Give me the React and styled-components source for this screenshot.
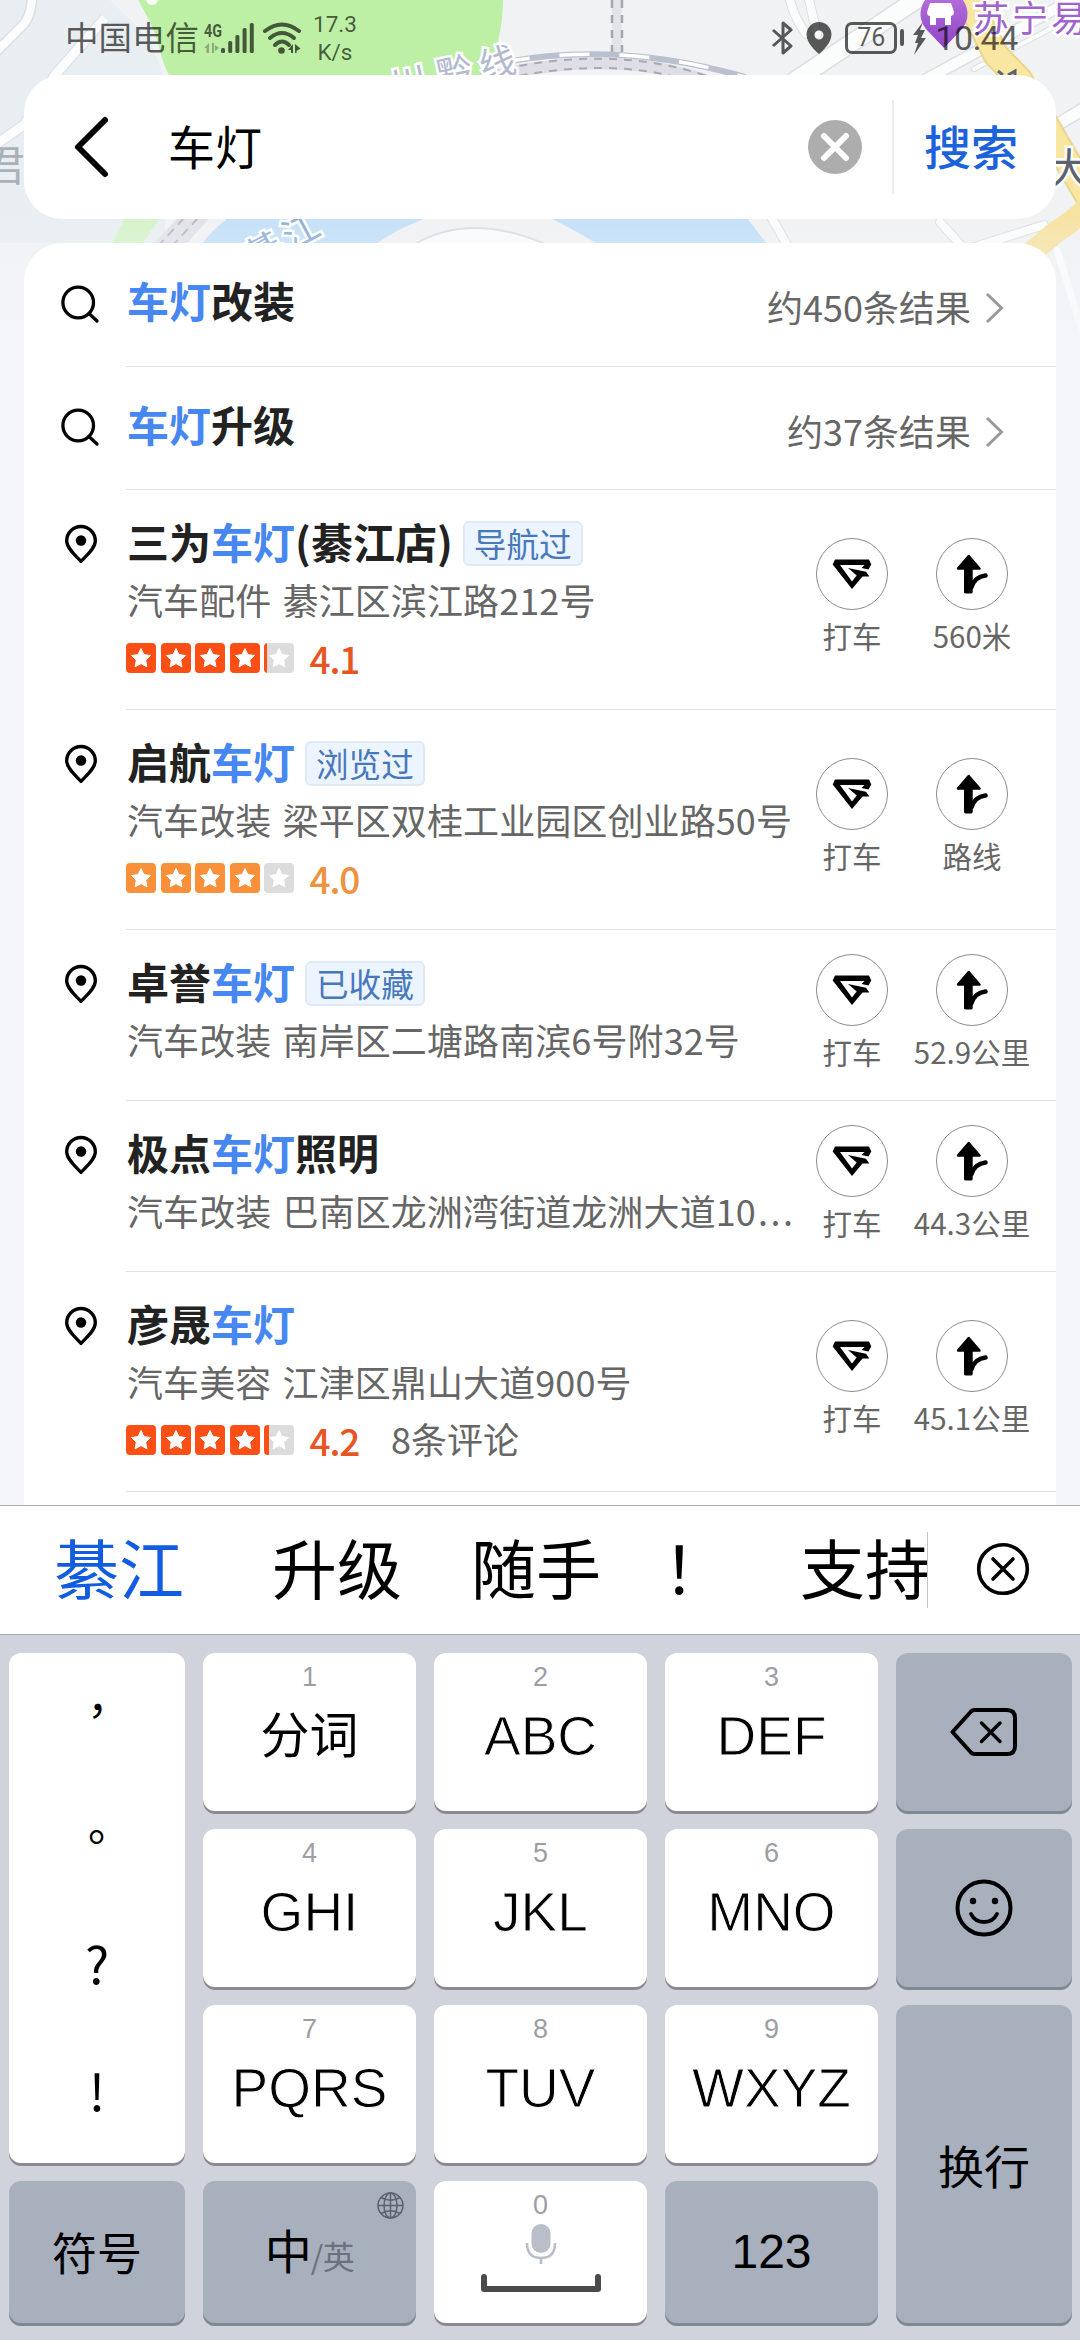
import React from 'react'
import styled, { createGlobalStyle } from 'styled-components'

const GlobalStyle = createGlobalStyle`
  * {
    box-sizing: border-box;
  }
  body {
    margin: 0;
    background: #f4f6f9;
    font-family: 'Noto Sans CJK SC', 'Noto Sans', sans-serif;
  }
  svg {
    display: block;
    flex: none;
  }
`

const suggestions = [
  { key: '改装', count: '约450条结果' },
  { key: '升级', count: '约37条结果' }
]

const places = [
  {
    before: '三为',
    after: '(綦江店)',
    tag: '导航过',
    address: '汽车配件 綦江区滨江路212号',
    score: '4.1',
    distance: '560米'
  },
  {
    before: '启航',
    tag: '浏览过',
    address: '汽车改装 梁平区双桂工业园区创业路50号',
    score: '4.0',
    distance: '路线'
  },
  {
    before: '卓誉',
    tag: '已收藏',
    address: '汽车改装 南岸区二塘路南滨6号附32号',
    distance: '52.9公里'
  },
  {
    before: '极点',
    after: '照明',
    address: '汽车改装 巴南区龙洲湾街道龙洲大道10',
    truncated: true,
    distance: '44.3公里'
  },
  {
    before: '彦晟',
    address: '汽车美容 江津区鼎山大道900号',
    score: '4.2',
    comments: '8条评论',
    distance: '45.1公里'
  }
]

const candidates = [
  { text: '綦江', width: 218, active: true },
  { text: '升级', width: 199 },
  { text: '随手', width: 192 },
  { text: '！', width: 137 },
  { text: '支持', width: 130 }
]

const Screen = styled.div`
  display: grid;
  width: 1080px;
  height: 2340px;
  overflow: hidden;
`

const MapBackdrop = styled.svg`
  grid-area: 1 / 1;
`

const Content = styled.div`
  grid-area: 1 / 1;
  z-index: 1;
  display: flex;
  flex-direction: column;
  height: 2340px;
`

/* status bar */

const StatusBar = styled.div`
  display: flex;
  justify-content: space-between;
  height: 75px;
  padding: 0 62px 0 65px;
  color: rgba(0, 0, 0, 0.64);
`

const StatusGroup = styled.div`
  display: flex;
  align-items: center;
  height: 75px;
`

const Carrier = styled.span`
  padding-bottom: 4px;
  font-size: 33.5px;
  line-height: 71px;
`

const NetSpeed = styled.div`
  display: flex;
  flex-direction: column;
  align-items: center;
  margin-left: 12px;
  font-family: Roboto, sans-serif;
  font-size: 22.5px;
  line-height: 28px;
  padding-top: 1px;
`

const Battery = styled.div`
  display: flex;
  align-items: center;
  justify-content: center;
  width: 52px;
  height: 32px;
  margin-left: 13px;
  border: 3px solid;
  border-radius: 7px;
  font-family: Roboto, sans-serif;
  font-size: 25px;
`

const BatteryNub = styled.div`
  width: 4px;
  height: 17px;
  margin: 0 8px 0 3px;
  border-radius: 2px;
  background: currentColor;
`

const Clock = styled.span`
  margin-left: 7px;
  font-family: Roboto, sans-serif;
  font-size: 34px;
  letter-spacing: -0.4px;
`

/* search box */

const SearchBox = styled.div`
  display: flex;
  align-items: center;
  height: 144px;
  margin: 0 24px 24px;
  padding-left: 48px;
  border-radius: 38px;
  background: #fff;
`

const Query = styled.div`
  flex: 1;
  margin-left: 56px;
  padding-bottom: 5px;
  color: #000;
  font-size: 47px;
  line-height: 60px;
`

const SearchButton = styled.div`
  display: flex;
  align-items: center;
  height: 94px;
  margin-left: 30px;
  padding: 0 38px 5px 30px;
  border-left: 2px solid #ececec;
  color: #1c62dc;
  font-size: 47px;
  font-weight: 500;
  line-height: 60px;
`

/* results */

const ResultCard = styled.div`
  flex: none;
  height: 1262px;
  margin: 0 24px;
  border-radius: 38px 38px 0 0;
  background: #fff;
  overflow: hidden;
`

const Row = styled.div`
  display: flex;
  height: ${({ height }) => height}px;
`

const RowIcon = styled.div`
  flex: none;
  width: 102px;
  padding-left: 37px;
  padding-top: ${({ top }) => top}px;
`

const RowBody = styled.div`
  display: flex;
  flex: 1;
  min-width: 0;
  border-bottom: 1px solid #e1e1e1;
`

const Title = styled.div`
  display: flex;
  align-items: center;
  height: 58px;
  padding-bottom: 4px;
  color: #222;
  font-size: 42px;
  font-weight: 700;
  line-height: 54px;
  white-space: nowrap;
`

const Highlight = styled.span`
  color: #4687f2;
`

const SuggestBody = styled(RowBody)`
  align-items: flex-start;
  justify-content: space-between;
  padding: 30px 51px 0 1px;
`

const ResultCount = styled.div`
  display: flex;
  align-items: center;
  height: 70px;
  color: #666;
  font-size: 36px;

  span {
    margin-right: 14px;
    padding-bottom: 5px;
  }
`

const PlaceInfo = styled.div`
  width: 666px;
  padding: 24px 0 0 1px;
`

const Tag = styled.span`
  height: 45px;
  margin: 4px 0 0 10px;
  padding: 0 9px;
  border: 2px solid #deeaf8;
  border-radius: 6px;
  background: #ebf4ff;
  color: #4878bc;
  font-size: 32.6px;
  font-weight: 400;
  line-height: 39px;
`

const Address = styled.div`
  height: 60px;
  color: #666;
  font-size: 36px;
  letter-spacing: 0.1px;
  line-height: 55px;
  word-spacing: 3px;
  white-space: nowrap;
`

const Dots = styled.span`
  margin-left: 2px;
  letter-spacing: 2.5px;
`

const RatingRow = styled.div`
  display: flex;
  align-items: center;
  height: 52px;
  margin-left: -1px;
`

const StarBox = styled.div`
  width: 30px;
  height: 30px;
  margin-right: 4.5px;
  border-radius: 4px;
  background: ${({ tint, fill }) =>
    `linear-gradient(90deg, ${tint} ${fill}%, #dcdcdc ${fill}%)`};
`

const Score = styled.span`
  margin-left: 11px;
  color: ${({ tint }) => tint};
  font-size: 37px;
  font-weight: 500;
  letter-spacing: -1.2px;
  line-height: 52px;
`

const Comments = styled.span`
  margin-left: 32px;
  padding-bottom: 3px;
  color: #666;
  font-size: 36px;
  line-height: 49px;
`

const Actions = styled.div`
  display: flex;
  align-items: center;
`

const Action = styled.div`
  display: flex;
  flex-direction: column;
  align-items: center;
  width: 120px;
  padding-bottom: 7px;
`

const ActionCircle = styled.div`
  width: 72px;
  height: 72px;
  border: 1px solid #8c8c8c;
  border-radius: 50%;

  svg {
    margin: -1px;
  }
`

const ActionLabel = styled.div`
  margin-top: 6px;
  color: #666;
  font-size: 29.5px;
  line-height: 38px;
  white-space: nowrap;
`

/* keyboard */

const Keyboard = styled.div`
  flex: 1;
  display: flex;
  flex-direction: column;
  border-top: 1px solid #a9aaad;
  background: #d0d2dc;
`

const CandidateBar = styled.div`
  display: flex;
  align-items: center;
  height: 129px;
  border-bottom: 1px solid #a9aaad;
  background: #fff;
`

const CandidateList = styled.div`
  display: flex;
  width: 928px;
  height: 76px;
  padding-left: 54px;
  border-right: 1px solid #c4c4c4;
  overflow: hidden;
`

const Candidate = styled.div`
  flex: none;
  width: ${({ width }) => width}px;
  color: ${({ active }) => (active ? '#115ce0' : '#000')};
  font-size: 65px;
  line-height: 68px;
`

const CloseWrap = styled.div`
  margin-left: 48px;
  padding-bottom: 3px;
`

const Keys = styled.div`
  display: grid;
  grid-template-columns: 176px 213px 213px 213px 176px;
  grid-template-rows: 161px 161px 161px 145px;
  gap: 15px 18px;
  padding: 18px 8px 0 9px;
`

const Key = styled.div`
  display: flex;
  flex-direction: column;
  align-items: center;
  justify-content: ${({ center }) => (center ? 'center' : 'flex-start')};
  grid-row: span ${({ rows }) => rows || 1};
  position: relative;
  padding-bottom: 4px;
  border-radius: 12px;
  background: ${({ dark }) => (dark ? '#a8afbd' : '#fff')};
  box-shadow: inset 0 -3px 0 ${({ dark }) => (dark ? '#828892' : '#8a8b8f')};
  color: #000;
  font-size: ${({ size }) => size || 46}px;
`

const KeyDigit = styled.span`
  margin-top: 9px;
  color: #9c9ea3;
  font-family: 'Liberation Sans', Arial, sans-serif;
  font-size: 27px;
  line-height: 31px;
`

const KeyLetters = styled.span`
  margin-top: 10px;
  font-family: 'Liberation Sans', 'Noto Sans CJK SC', sans-serif;
  font-size: ${({ size }) => size || 55}px;
  line-height: 66px;
  -webkit-text-stroke: ${({ size }) => (size ? 0 : 0.9)}px #fff;
`

const NumberLabel = styled.span`
  font-family: 'Liberation Sans', Arial, sans-serif;
  font-size: 48px;
`

const Punct = styled.span`
  height: 127.5px;
  font-size: ${({ size }) => size || 44}px;
  line-height: 108px;
  transform: translate(${({ dx }) => dx || 0}px, ${({ dy }) => dy || 0}px);
`

const LangSwitch = styled.div`
  display: flex;
  align-items: baseline;
  font-size: 47px;
  line-height: 60px;
`

const LangOther = styled.span`
  margin-left: -1px;
  color: #6c727c;
  font-size: 32px;
  letter-spacing: -0.5px;
`

const GlobeBadge = styled.div`
  position: absolute;
  top: 11px;
  right: 12px;
`

const MapArt = () => (
  <MapBackdrop width='1080' height='480' viewBox='0 0 1080 480'>
    <defs>
      <linearGradient id='fade' x1='0' y1='0' x2='0' y2='1'>
        <stop offset='0.45' stopColor='#f4f6f9' stopOpacity='0' />
        <stop offset='0.8' stopColor='#f4f6f9' />
      </linearGradient>
      <linearGradient id='shop' x1='0' y1='0' x2='0' y2='1'>
        <stop offset='0' stopColor='#b873e0' />
        <stop offset='1' stopColor='#8d45c4' />
      </linearGradient>
    </defs>
    <rect width='1080' height='480' fill='#f0f2f4' />
    <path d='M0 0H110L150 40L165 80V243H0Z' fill='#e8eef1' />
    <g fill='none' stroke='#dcdfe3' strokeWidth='11'>
      <path d='M32 -5Q32 18 20 28L-5 53' />
      <path d='M105 18L55 75L24 125L-5 145' />
    </g>
    <g fill='none' stroke='#fbfcfc' strokeWidth='8'>
      <path d='M32 -5Q32 18 20 28L-5 53' />
      <path d='M105 18L55 75L24 125L-5 145' strokeWidth='9' />
    </g>
    <path
      d='M138 0Q155 28 160 50Q163 66 172 80H483Q503 42 503 0Z'
      fill='#bdf0a4'
    />
    <circle cx='152' cy='-1' r='6' fill='#fff' />
    <text x='4' y='181' fontSize='42' fill='#aab1b8' textAnchor='middle'>
      君
    </text>

    {/* river and banks */}
    <path d='M125 218H160L142 244H112Z' fill='#d5f3c9' />
    <path d='M178 218H210L186 244H153Z' fill='#e2e3e9' />
    <path d='M184 218L160 244M198 218L174 244' stroke='#b9bcc6' strokeWidth='2' strokeDasharray='9 6' />
    <path d='M228 218H426Q395 230 376 244H202Q212 230 228 218Z' fill='#c4e0f8' />
    <path d='M550 218H747L767 244H597Q575 230 550 218Z' fill='#c4e0f8' />
    <path d='M415 244Q470 212 545 244Z' fill='#fafbfc' stroke='#dcdee2' strokeWidth='2' />
    <g transform='translate(291 251) rotate(-28)'>
      <text fontSize='36' fill='#8fb0d6' stroke='#fff' strokeWidth='5' paintOrder='stroke'>
        江
      </text>
      <text x='-42' fontSize='36' fill='#8fb0d6' stroke='#fff' strokeWidth='5' paintOrder='stroke'>
        綦
      </text>
    </g>

    {/* railway */}
    <path d='M617 0V55' stroke='#e3e3ea' strokeWidth='10' />
    <path d='M612 0V52M622 0V52' stroke='#a4a6ae' strokeWidth='2.5' strokeDasharray='8 7' />
    <path d='M500 63Q617 40 745 77' fill='none' stroke='#bac0cf' strokeWidth='6' />
    <path d='M500 63Q617 40 745 77' fill='none' stroke='#fff' strokeWidth='3.5' strokeDasharray='30 30' />
    <path d='M490 77Q610 48 705 80' fill='none' stroke='#dfdee6' strokeWidth='12' />
    <path
      d='M490 72Q610 43 710 77M490 82Q610 53 700 84'
      fill='none'
      stroke='#a9a9b1'
      strokeWidth='2'
      strokeDasharray='8 7'
    />
    <g fontSize='36' fill='#b3bad0' stroke='#fff' strokeWidth='5' paintOrder='stroke'>
      <text transform='translate(394 99) rotate(-12)'>川</text>
      <text transform='translate(440 89) rotate(-12)'>黔</text>
      <text transform='translate(483 80) rotate(-14)'>线</text>
    </g>

    {/* roads on the right */}
    <g fill='none' stroke='#dddfe3' strokeLinecap='round'>
      <path d='M789 -5Q792 14 806 34M808 -5L817 34' strokeWidth='10' />
      <path d='M790 84L925 -6' strokeWidth='20' />
      <path d='M925 80L1090 -10' strokeWidth='13' />
      <path d='M974 69L1090 8' strokeWidth='6' />
      <path d='M1040 135L1090 105' strokeWidth='14' />
      <path d='M770 215L790 250M940 222L965 250M965 250L1044 225' strokeWidth='10' />
    </g>
    <g fill='none' stroke='#fbfcfc' strokeLinecap='round'>
      <path d='M789 -5Q792 14 806 34M808 -5L817 34' strokeWidth='8' />
      <path d='M790 84L925 -6' strokeWidth='17' />
      <path d='M925 80L1090 -10' strokeWidth='10' />
      <path d='M974 69L1090 8' strokeWidth='4' />
      <path d='M1040 135L1090 105' strokeWidth='11' />
      <path d='M770 215L790 250M940 222L965 250M965 250L1044 225' strokeWidth='8' />
      <path d='M1057 250L1082 330' strokeWidth='7' />
    </g>
    <path d='M966 -5L996 55L1020 80L1090 200' fill='none' stroke='#ebd58e' strokeWidth='27' />
    <path d='M966 -5L996 55L1020 80L1090 200' fill='none' stroke='#f9e6a0' strokeWidth='23' />
    <path d='M1025 258L1056 232Q1075 220 1090 205' fill='none' stroke='#f6e3a4' strokeWidth='22' />
    <g fontSize='42' fill='#5b646e' stroke='#fff' strokeWidth='5' paintOrder='stroke'>
      <text x='1048' y='184'>大</text>
    </g>
    <path d='M998 71L1003 75M1008 75L1015 71V76' stroke='#5b646e' strokeWidth='3' fill='none' />
    <path d='M944 48L926 29A23.500 23.500 0 1 1 962 29Z' fill='url(#shop)' />
    <path d='M930 3H951L954 12Q954 16 950 16H930Q927 16 927 12Z' fill='#fff' />
    <path d='M930 16H951V25H945V18H936V25H930Z' fill='#fff' />
    <g fontSize='36' fill='#a064cc' stroke='#fff' strokeWidth='5' paintOrder='stroke'>
      <text x='973' y='32'>苏</text>
      <text x='1012' y='32'>宁</text>
      <text x='1051' y='32'>易</text>
    </g>
    <rect width='1080' height='480' fill='url(#fade)' />
  </MapBackdrop>
)

const SignalIcon = () => (
  <svg width='56' height='34' viewBox='0 0 56 34' fill='currentColor'>
    <text x='5' y='15.500' fontFamily='Roboto, sans-serif' fontWeight='700' fontSize='19' textLength='18' lengthAdjust='spacingAndGlyphs'>
      4G
    </text>
    <path d='M10 22V32H7.500V27H5ZM13 22H15V32H13ZM16 24L20 27L16 30Z' opacity='.45' />
    <rect x='22' y='27' width='4' height='5' rx='1.500' />
    <rect x='29.200' y='20' width='4' height='12' rx='1.500' />
    <rect x='36.400' y='14' width='4' height='18' rx='1.500' />
    <rect x='43.600' y='7' width='4' height='25' rx='1.500' />
    <rect x='50.800' y='2' width='4' height='30' rx='1.500' />
  </svg>
)

const WifiIcon = () => (
  <svg width='46' height='34' viewBox='0 0 46 34'>
    <g fill='none' stroke='currentColor' strokeWidth='4' strokeLinecap='round'>
      <path d='M10 10Q27 -3 44 10' />
      <path d='M15 17Q27 7 39 17' />
      <path d='M20 24Q27 17 34 24' />
    </g>
    <circle cx='26.500' cy='29.500' r='3.300' fill='currentColor' />
    <path d='M38 23V32H36V29H33ZM40 23V32H41.500V30L45.500 27.500Z' fill='currentColor' />
  </svg>
)

const BluetoothWrap = styled.div`
  margin-right: 11px;
`

const BluetoothIcon = () => (
  <svg width='24' height='34' viewBox='0 0 24 34' fill='none' stroke='currentColor' strokeWidth='3' strokeLinejoin='round'>
    <path d='M2 9L20 25L12 32V2L20 9L2 25' />
  </svg>
)

const LocationIcon = () => (
  <svg width='26' height='32' viewBox='0 0 26 32'>
    <path
      fill='currentColor'
      fillRule='evenodd'
      d='M13 0A12.500 12.500 0 0 1 25.500 12.500C25.500 20 18 28 13 32C8 28 .5 20 .5 12.500A12.500 12.500 0 0 1 13 0ZM13 8.500A4.500 4.500 0 1 0 13 17.500A4.500 4.500 0 1 0 13 8.500Z'
    />
  </svg>
)

const BoltIcon = () => (
  <svg width='16' height='34' viewBox='0 0 16 34'>
    <path d='M11 1L1 14H6L3 22H6L2 34L14 17H9L13 9H8Z' fill='currentColor' />
  </svg>
)

const BackIcon = () => (
  <svg width='40' height='64' viewBox='0 0 40 64' fill='none' stroke='#000' strokeWidth='6' strokeLinecap='round' strokeLinejoin='round'>
    <path d='M33 5L6 32L33 59' />
  </svg>
)

const ClearIcon = () => (
  <svg width='54' height='54' viewBox='0 0 54 54'>
    <circle cx='27' cy='27' r='27' fill='#adadad' />
    <path d='M16 16L38 38M38 16L16 38' stroke='#fff' strokeWidth='6' strokeLinecap='round' />
  </svg>
)

const LensIcon = () => (
  <svg width='40' height='40' viewBox='0 0 40 40' fill='none' stroke='#000' strokeWidth='3.300'>
    <circle cx='17.200' cy='17.500' r='15.300' />
    <path d='M28 28.500L36 36' strokeLinecap='round' />
  </svg>
)

const PinIcon = () => (
  <svg width='40' height='40' viewBox='0 0 40 40'>
    <path
      d='M20 3.500A14.300 14.300 0 0 1 34.300 18C34.300 25 26 32 20 38.500C14 32 5.700 25 5.700 18A14.300 14.300 0 0 1 20 3.500Z'
      fill='none'
      stroke='#000'
      strokeWidth='3.300'
    />
    <circle cx='20' cy='17.500' r='5.200' />
  </svg>
)

const ChevronIcon = () => (
  <svg width='20' height='32' viewBox='0 0 20 32' fill='none' stroke='#999' strokeWidth='3'>
    <path d='M2 2L16.500 16L2 30' />
  </svg>
)

const TaxiIcon = () => (
  <svg width='72' height='72' viewBox='0 0 72 72'>
    <path d='M19 21.500H53L55.300 26.500L52.500 31.500L45.500 30L48.500 27H24L36 43.500L40.700 37.600L32 30L50 33.700L53.300 38.500H46.500L36 51L16.700 26.500Z' />
  </svg>
)

const RouteIcon = () => (
  <svg width='72' height='72' viewBox='0 0 72 72' strokeLinejoin='round' strokeLinecap='round'>
    <path d='M32.700 18L43.500 30.500H22Z' stroke='#000' strokeWidth='2.500' />
    <path d='M28 30H36.700V54Q36.500 55.500 35 55.500H30Q28 55.500 28 54Z' />
    <path d='M35.500 49Q38.500 39 49.500 37.500' fill='none' stroke='#000' strokeWidth='4.600' />
  </svg>
)

const StarIcon = () => (
  <svg width='30' height='30' viewBox='0 0 30 30'>
    <path
      d='M15 5.500L17.900 11.600L24.500 12.500L19.700 17.200L20.900 23.800L15 20.600L9.100 23.800L10.300 17.200L5.500 12.500L12.100 11.600Z'
      fill='#fff'
      stroke='#fff'
      strokeLinejoin='round'
    />
  </svg>
)

const CloseIcon = () => (
  <svg width='54' height='54' viewBox='0 0 54 54' fill='none' stroke='#000' strokeWidth='3.600' strokeLinecap='round'>
    <circle cx='27' cy='27' r='24.300' />
    <path d='M17 17L37 37M37 17L17 37' />
  </svg>
)

const BackspaceIcon = () => (
  <svg width='68' height='50' viewBox='0 0 68 50' fill='none' stroke='#000' strokeWidth='4' strokeLinejoin='round' strokeLinecap='round'>
    <path d='M24.500 3H57Q65 3 65 11V39Q65 47 57 47H24.500Q22.500 47 21 45.500L2.500 25L21 4.500Q22.500 3 24.500 3Z' />
    <path d='M31.500 16L50 34.500M50 16L31.500 34.500' strokeWidth='3.400' />
  </svg>
)

const SmileIcon = () => (
  <svg width='58' height='58' viewBox='0 0 58 58'>
    <circle cx='29' cy='29' r='26.500' fill='none' stroke='#000' strokeWidth='4' />
    <circle cx='18' cy='22' r='3.200' />
    <circle cx='40' cy='22' r='3.200' />
    <path d='M16 35Q20 43 29 43Q38 43 42 35' fill='none' stroke='#000' strokeWidth='3.800' strokeLinecap='round' />
  </svg>
)

const GlobeIcon = () => (
  <svg width='27' height='27' viewBox='0 0 27 27' fill='none' stroke='#5c626b' strokeWidth='1.500'>
    <circle cx='13.500' cy='13.500' r='12.500' />
    <ellipse cx='13.500' cy='13.500' rx='6.500' ry='12.500' />
    <path d='M13.500 1V26M1 13.500H26M4 5.500Q13.500 11 23 5.500M4 21.500Q13.500 16 23 21.500' />
  </svg>
)

const SpaceIcon = () => (
  <svg width='122' height='74' viewBox='0 0 122 74'>
    <rect x='51.500' y='3' width='19' height='29' rx='9.500' fill='#b9bec8' />
    <path d='M47 22V24Q48 37 61 37Q74 37 75 24V22M61 37V43' fill='none' stroke='#b9bec8' strokeWidth='2.600' />
    <path d='M4 56V68H118V56' fill='none' stroke='#4b4b4b' strokeWidth='6' strokeLinecap='round' strokeLinejoin='round' />
  </svg>
)

const Rating = ({ score, comments }) => {
  const low = score === '4.0'
  const tint = low ? '#fa913a' : '#fb4f16'
  const fills = [100, 100, 100, 100, (Number(score) - 4) * 90]
  return (
    <RatingRow>
      {fills.map((fill, index) => (
        <StarBox key={index} tint={tint} fill={Math.round(fill)}>
          <StarIcon />
        </StarBox>
      ))}
      <Score tint={low ? '#ee9240' : '#e95423'}>{score}</Score>
      {comments && <Comments>{comments}</Comments>}
    </RatingRow>
  )
}

const Place = ({ item }) => (
  <Row height={item.score ? 220 : 171}>
    <RowIcon top={33}>
      <PinIcon />
    </RowIcon>
    <RowBody>
      <PlaceInfo>
        <Title>
          {item.before}
          <Highlight>车灯</Highlight>
          {item.after}
          {item.tag && <Tag>{item.tag}</Tag>}
        </Title>
        <Address>
          {item.address}
          {item.truncated && <Dots>...</Dots>}
        </Address>
        {item.score && <Rating score={item.score} comments={item.comments} />}
      </PlaceInfo>
      <Actions>
        <Action>
          <ActionCircle>
            <TaxiIcon />
          </ActionCircle>
          <ActionLabel>打车</ActionLabel>
        </Action>
        <Action>
          <ActionCircle>
            <RouteIcon />
          </ActionCircle>
          <ActionLabel>{item.distance}</ActionLabel>
        </Action>
      </Actions>
    </RowBody>
  </Row>
)

const LetterKey = ({ digit, label, size }) => (
  <Key>
    <KeyDigit>{digit}</KeyDigit>
    <KeyLetters size={size}>{label}</KeyLetters>
  </Key>
)

const App = () => (
  <>
    <GlobalStyle />
    <Screen>
      <MapArt />
      <Content>
        <StatusBar>
          <StatusGroup>
            <Carrier>中国电信</Carrier>
            <SignalIcon />
            <WifiIcon />
            <NetSpeed>
              <span>17.3</span>
              <span>K/s</span>
            </NetSpeed>
          </StatusGroup>
          <StatusGroup>
            <BluetoothWrap>
              <BluetoothIcon />
            </BluetoothWrap>
            <LocationIcon />
            <Battery>76</Battery>
            <BatteryNub />
            <BoltIcon />
            <Clock>10:44</Clock>
          </StatusGroup>
        </StatusBar>

        <SearchBox>
          <BackIcon />
          <Query>车灯</Query>
          <ClearIcon />
          <SearchButton>搜索</SearchButton>
        </SearchBox>

        <ResultCard>
          {suggestions.map((item, index) => (
            <Row key={item.key} height={index === 0 ? 124 : 123}>
              <RowIcon top={index === 0 ? 42 : 41}>
                <LensIcon />
              </RowIcon>
              <SuggestBody>
                <Title>
                  <Highlight>车灯</Highlight>
                  {item.key}
                </Title>
                <ResultCount>
                  <span>{item.count}</span>
                  <ChevronIcon />
                </ResultCount>
              </SuggestBody>
            </Row>
          ))}
          {places.map((item) => (
            <Place key={item.before} item={item} />
          ))}
        </ResultCard>

        <Keyboard>
          <CandidateBar>
            <CandidateList>
              {candidates.map((item) => (
                <Candidate key={item.text} width={item.width} active={item.active}>
                  {item.text}
                </Candidate>
              ))}
            </CandidateList>
            <CloseWrap>
              <CloseIcon />
            </CloseWrap>
          </CandidateBar>
          <Keys>
            <Key rows={3}>
              <Punct dx={12} dy={-12}>，</Punct>
              <Punct dx={13} dy={-12}>。</Punct>
              <Punct size={51}>?</Punct>
              <Punct size={51}>!</Punct>
            </Key>
            <LetterKey digit='1' label='分词' size={49} />
            <LetterKey digit='2' label='ABC' />
            <LetterKey digit='3' label='DEF' />
            <Key dark center>
              <BackspaceIcon />
            </Key>
            <LetterKey digit='4' label='GHI' />
            <LetterKey digit='5' label='JKL' />
            <LetterKey digit='6' label='MNO' />
            <Key dark center>
              <SmileIcon />
            </Key>
            <LetterKey digit='7' label='PQRS' />
            <LetterKey digit='8' label='TUV' />
            <LetterKey digit='9' label='WXYZ' />
            <Key dark center rows={2}>换行</Key>
            <Key dark center size={45}>符号</Key>
            <Key dark center>
              <LangSwitch>
                中<LangOther>/英</LangOther>
              </LangSwitch>
              <GlobeBadge>
                <GlobeIcon />
              </GlobeBadge>
            </Key>
            <Key>
              <KeyDigit>0</KeyDigit>
              <SpaceIcon />
            </Key>
            <Key dark center>
              <NumberLabel>123</NumberLabel>
            </Key>
          </Keys>
        </Keyboard>
      </Content>
    </Screen>
  </>
)

export default App
